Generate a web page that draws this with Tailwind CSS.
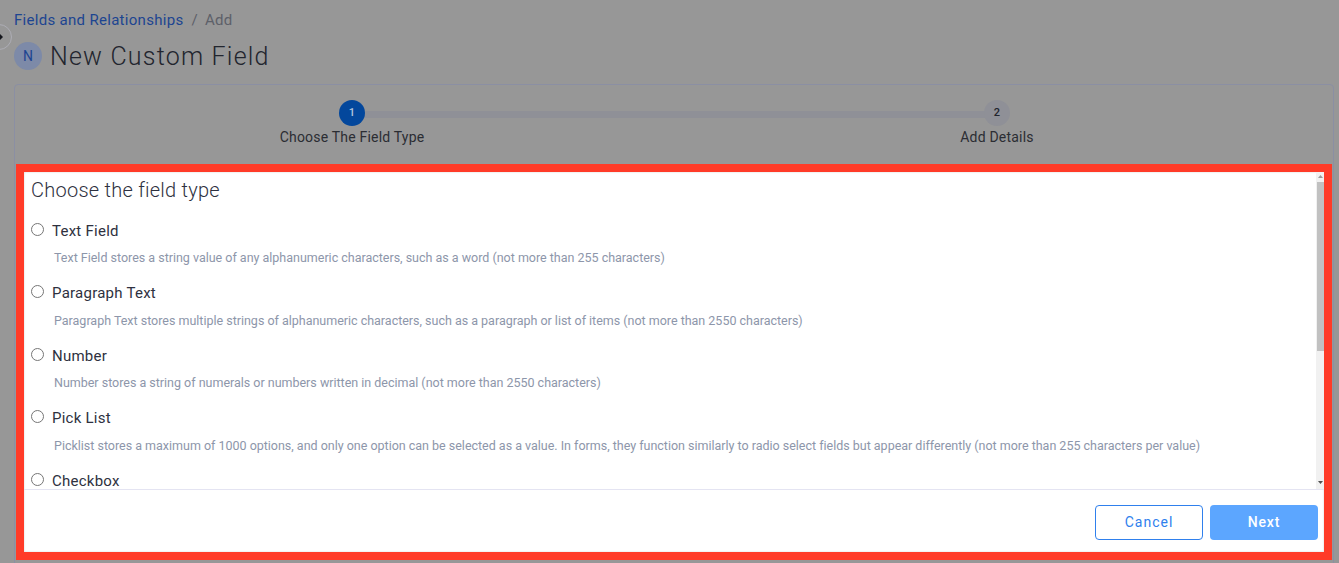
<!DOCTYPE html>
<html lang="en">
<head>
<meta charset="UTF-8">
<title>New Custom Field</title>
<script src="https://cdn.jsdelivr.net/npm/@tailwindcss/browser@4"></script>
</head>
<body class="bg-[#979797] font-['Roboto',sans-serif] overflow-hidden">
<div class="relative h-[563px] w-[1339px] overflow-hidden pl-[14px] pr-[5px]">
  <!-- sidebar toggle -->
  <div class="absolute left-[-14px] top-[24px] flex h-[26px] w-[26px] items-center justify-end rounded-full border border-[#adadb5] bg-[#979797] pr-[7px]">
    <svg width="5" height="8" viewBox="0 0 5 8"><path d="M0 0l4 4-4 4z" fill="#15171d"/></svg>
  </div>

  <nav class="flex h-[40px] items-center text-[15px] tracking-[0.3px]">
    <a class="text-[#1d4591]">Fields and Relationships</a>
    <span class="ml-[8px] mr-[7px] text-[#5d6069]">/</span>
    <span class="text-[#5d6069]">Add</span>
  </nav>

  <div class="flex h-[32px] items-center">
    <div class="flex h-[28px] w-[28px] items-center justify-center rounded-full bg-[#7d8aa8] text-[14px] text-[#1d4591]">N</div>
    <h1 class="ml-[8px] mt-[2px] text-[25px] font-light tracking-[1.2px] text-[#22252e]">New Custom Field</h1>
  </div>

  <div class="mt-[12px] h-[500px] rounded-t-[4px] border border-[#8b8fa3]">
    <!-- stepper -->
    <div class="relative h-[79px]">
      <div class="absolute left-[337px] top-[26px] h-[7px] w-[645px] bg-[#8f9097]"></div>
      <div class="absolute left-[265px] top-[15px] flex w-[144px] flex-col items-center">
        <div class="z-10 flex h-[26px] w-[26px] items-center justify-center rounded-full bg-[#03479c] text-[11px] font-medium text-[#b5c7de]">1</div>
        <div class="mt-[1px] whitespace-nowrap text-[14px] tracking-[0.2px] text-[#2b2d33]">Choose The Field Type</div>
      </div>
      <div class="absolute left-[945px] top-[15px] flex w-[74px] flex-col items-center">
        <div class="z-10 flex h-[26px] w-[26px] items-center justify-center rounded-full bg-[#8f9097] text-[11px] font-medium text-[#22252e]">2</div>
        <div class="mt-[1px] whitespace-nowrap text-[14px] tracking-[0.2px] text-[#2b2d33]">Add Details</div>
      </div>
    </div>

    <!-- highlighted step content -->
    <div class="ml-[1px] flex h-[396px] w-[1316px] flex-col border-[8px] border-[#ff3b28] bg-white shadow-[inset_0_0_2px_rgba(0,0,0,0.2)]">
      <div class="relative h-[317px] overflow-hidden pl-[7px]">
        <h2 class="pt-[6px] text-[20px] font-light leading-[24px] tracking-[0.25px] text-[#2e3140]">Choose the field type</h2>

        <div class="mt-[18px] flex h-[20px] items-center">
          <span class="-mt-[2px] h-[13px] w-[13px] rounded-full border border-[#767676]"></span>
          <span class="ml-[8px] mt-[2px] text-[15px] tracking-[0.25px] text-[#2e3140]">Text Field</span>
        </div>
        <p class="ml-[23px] mt-[9px] h-[33.5px] text-[12.5px] leading-[18px] tracking-[-0.01px] text-[#8d96aa]">Text Field stores a string value of any alphanumeric characters, such as a word (not more than 255 characters)</p>

        <div class="flex h-[20px] items-center">
          <span class="-mt-[2px] h-[13px] w-[13px] rounded-full border border-[#767676]"></span>
          <span class="ml-[8px] mt-[2px] text-[15px] tracking-[0.25px] text-[#2e3140]">Paragraph Text</span>
        </div>
        <p class="ml-[23px] mt-[9px] h-[33.5px] text-[12.5px] leading-[18px] tracking-[-0.01px] text-[#8d96aa]">Paragraph Text stores multiple strings of alphanumeric characters, such as a paragraph or list of items (not more than 2550 characters)</p>

        <div class="flex h-[20px] items-center">
          <span class="-mt-[2px] h-[13px] w-[13px] rounded-full border border-[#767676]"></span>
          <span class="ml-[8px] mt-[2px] text-[15px] tracking-[0.25px] text-[#2e3140]">Number</span>
        </div>
        <p class="ml-[23px] mt-[9px] h-[33.5px] text-[12.5px] leading-[18px] tracking-[-0.01px] text-[#8d96aa]">Number stores a string of numerals or numbers written in decimal (not more than 2550 characters)</p>

        <div class="flex h-[20px] items-center">
          <span class="-mt-[2px] h-[13px] w-[13px] rounded-full border border-[#767676]"></span>
          <span class="ml-[8px] mt-[2px] text-[15px] tracking-[0.25px] text-[#2e3140]">Pick List</span>
        </div>
        <p class="ml-[23px] mt-[9px] h-[33.5px] text-[12.5px] leading-[18px] tracking-[-0.01px] text-[#8d96aa]">Picklist stores a maximum of 1000 options, and only one option can be selected as a value. In forms, they function similarly to radio select fields but appear differently (not more than 255 characters per value)</p>

        <div class="flex h-[20px] items-center">
          <span class="-mt-[2px] h-[13px] w-[13px] rounded-full border border-[#767676]"></span>
          <span class="ml-[8px] mt-[2px] text-[15px] tracking-[0.25px] text-[#2e3140]">Checkbox</span>
        </div>

        <!-- scrollbar -->
        <div class="absolute right-0 top-0 flex h-full w-[8px] flex-col bg-[#f1f1f1] pl-[1px]">
          <svg class="mt-[3px] ml-[1px]" width="5" height="3" viewBox="0 0 5 3"><path d="M2.5 0l2.5 3h-5z" fill="#9a9a9a"/></svg>
          <div class="mt-[4px] h-[169px] bg-[#c1c1c1]"></div>
          <svg class="mt-auto mb-[5px] ml-[1px]" width="5" height="3" viewBox="0 0 5 3"><path d="M0 0h5l-2.5 3z" fill="#505050"/></svg>
        </div>
      </div>

      <div class="flex h-[63px] items-center justify-end gap-[7px] border-t border-[#e4e4f2] pr-[6px] pt-[2px]">
        <button class="h-[35px] w-[108px] rounded-[4px] border border-[#2f80ed] text-[14px] tracking-[1px] text-[#2f80ed]">Cancel</button>
        <button class="h-[35px] w-[108px] rounded-[4px] bg-[#5ca6ff] text-[14px] font-medium tracking-[0.8px] text-white">Next</button>
      </div>
    </div>
  </div>
</div>
</body>
</html>
